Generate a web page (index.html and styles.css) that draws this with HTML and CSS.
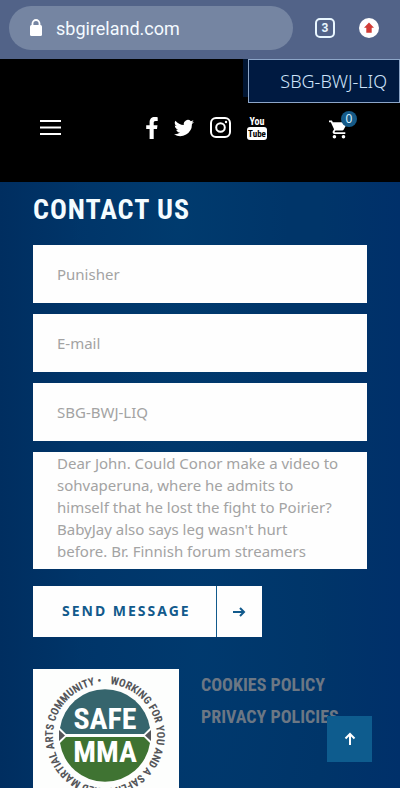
FILE: index.html
```html
<!DOCTYPE html>
<html lang="en">
<head>
  <meta charset="UTF-8">
  <meta name="viewport" content="width=device-width, initial-scale=1.0">
  <title>Contact Us</title>
  <link rel="stylesheet" href="styles.css">
</head>
<body>
  <!-- Browser bar -->
  <div class="browser-bar">
    <div class="address">
      <svg width="14" height="18" viewBox="0 0 14 18" fill="none">
        <path d="M3.5 7V4.5a3.5 3.5 0 0 1 7 0V7" stroke="#fff" stroke-width="1.8"></path>
        <rect x="1" y="6" width="12" height="11" rx="1.5" fill="#fff"></rect>
      </svg>
      <span>sbgireland.com</span>
    </div>
    <button class="tabs" aria-label="Open tabs">3</button>
    <button class="update" aria-label="Update available">
      <svg width="20" height="20" viewBox="0 0 20 20">
        <circle cx="10" cy="10" r="10" fill="#fff"></circle>
        <path d="M10 4.5l5 5.2h-2.3v5H7.3v-5H5z" fill="#d23c36"></path>
      </svg>
    </button>
  </div>

  <div class="page">
    <!-- Site header -->
    <header class="header">
      <button class="menu" aria-label="Menu">
        <svg width="21" height="16" viewBox="0 0 21 16" fill="#fff">
          <rect y="0" width="21" height="2"></rect>
          <rect y="6.5" width="21" height="2"></rect>
          <rect y="13" width="21" height="2"></rect>
        </svg>
      </button>

      <nav class="social">
        <a href="#" aria-label="Facebook">
          <svg width="12" height="22" viewBox="0 0 12 22" fill="#fff">
            <path d="M11.7 0.2v3.7H9.6C8 3.9 7.7 4.7 7.7 5.8v2.4h3.8L11 12.1H7.7V22H3.6v-9.9H0.2V8.2h3.4V5.3C3.6 1.9 5.6 0 8.7 0c1.4 0 2.6.1 3 .2z"></path>
          </svg>
        </a>
        <a href="#" aria-label="Twitter">
          <svg width="20" height="18" viewBox="0 2 24 20" fill="#fff">
            <path d="M24 4.6a10 10 0 0 1-2.8.8 5 5 0 0 0 2.1-2.7c-1 .5-2 .9-3.1 1.2a4.9 4.9 0 0 0-8.4 4.4A14 14 0 0 1 1.7 3.2a4.9 4.9 0 0 0 1.5 6.5 5 5 0 0 1-2.2-.6c0 2.3 1.6 4.4 3.9 4.9a5 5 0 0 1-2.2.1 4.9 4.9 0 0 0 4.6 3.4A10 10 0 0 1 0 19.5a14 14 0 0 0 21.5-12.4c1-.7 1.8-1.5 2.5-2.5z"></path>
          </svg>
        </a>
        <a href="#" aria-label="Instagram">
          <svg width="21" height="21" viewBox="0 0 21 21" fill="none" stroke="#fff" stroke-width="2">
            <rect x="1" y="1" width="19" height="19" rx="5"></rect>
            <circle cx="10.5" cy="10.5" r="4.3"></circle>
            <circle cx="16" cy="5" r="1.2" fill="#fff" stroke="none"></circle>
          </svg>
        </a>
        <a href="#" aria-label="YouTube">
          <svg width="20" height="24" viewBox="0 0 20 24">
            <rect x="0" y="11" width="20" height="13" rx="3" fill="#fff"></rect>
            <text class="yt yt-top" x="10" y="9" fill="#fff">You</text>
            <text class="yt" x="10" y="21" fill="#000">Tube</text>
          </svg>
        </a>
      </nav>

      <a href="#" class="cart" aria-label="Cart">
        <svg width="19" height="19" viewBox="1 2 21 20" fill="#fff">
          <path d="M7 18a2 2 0 1 0 0 4 2 2 0 0 0 0-4zM1 2v2h2l3.6 7.6-1.4 2.4C4.5 15.400 5.500 17 7 17h12v-2H7.400a.3.3 0 0 1-.2-.4l.9-1.600h7.500c.7 0 1.400-.4 1.700-1l3.600-6.500A1 1 0 0 0 20 4H5.200l-.9-2zm16 16a2 2 0 1 0 0 4 2 2 0 0 0 0-4z"></path>
        </svg>
        <span class="cart-count">0</span>
      </a>

      <div class="suggestion">SBG-BWJ-LIQ</div>
    </header>

    <main class="content">
      <h1 class="title">CONTACT US</h1>

      <form class="form">
        <input class="field" type="text" aria-label="Name" value="Punisher">
        <input class="field" type="email" aria-label="E-mail" placeholder="E-mail">
        <input class="field" type="text" aria-label="Subject" value="SBG-BWJ-LIQ">
        <textarea class="field message" aria-label="Message">Dear John. Could Conor make a video to sohvaperuna, where he admits to himself that he lost the fight to Poirier? BabyJay also says leg wasn't hurt before. Br. Finnish forum streamers</textarea>
        <button class="send" type="submit">
          <span class="send-label">SEND MESSAGE</span>
          <span class="send-icon">
            <svg width="14" height="12" viewBox="0 0 14 12" fill="none" stroke="#125a8c" stroke-width="2">
              <path d="M1 6h11M8 2l4 4-4 4"></path>
            </svg>
          </span>
        </button>
      </form>

      <!-- Footer -->
      <footer class="footer">
        <svg class="badge" viewBox="0 0 146 146" role="img" aria-label="Safe MMA">
          <defs>
            <path id="ring" d="M72 15a52 52 0 1 1-.1 0"></path>
          </defs>
          <rect width="146" height="146" fill="#fdfefd"></rect>
          <path d="M27 59a45.500 45.500 0 0 1 90 0l-6 6H33z" fill="#36656d"></path>
          <path d="M27 74l6-6h78l6 6a45.500 45.500 0 0 1-90 0z" fill="#3f7332"></path>
          <path d="M26 61l6 5.500-6 5.500zM118 61l-6 5.500 6 5.500z" fill="#55565a"></path>
          <text class="ring-text"><textPath href="#ring" startOffset="5">WORKING FOR YOU AND A SAFER MIXED MARTIAL ARTS COMMUNITY •</textPath></text>
          <text class="badge-text" x="72" y="60">SAFE</text>
          <text class="badge-text" x="72" y="93">MMA</text>
        </svg>
        <nav class="links">
          <a href="#">COOKIES POLICY</a>
          <a href="#">PRIVACY POLICIES</a>
        </nav>
      </footer>
    </main>

    <button class="to-top" aria-label="Back to top">
      <svg width="12" height="14" viewBox="0 0 12 14" fill="none" stroke="#fff" stroke-width="2">
        <path d="M6 13V2M1.500 6.500L6 2l4.500 4.500"></path>
      </svg>
    </button>
  </div>
</body>
</html>
```
FILE: styles.css
```css
* {
  margin: 0;
  padding: 0;
  box-sizing: border-box;
}

body {
  height: 100vh;
  display: flex;
  flex-direction: column;
  overflow: hidden;
  background: #003467;
  font-family: "Noto Sans", "Open Sans", sans-serif;
  font-size: 15px;
}

button {
  background: none;
  border: none;
  font-family: inherit;
  cursor: pointer;
}

a {
  text-decoration: none;
}

svg {
  display: block;
}

/* Browser bar */
.browser-bar {
  flex: none;
  height: 59px;
  padding: 0 21px 3px 9px;
  display: flex;
  align-items: center;
  background: #526388;
}

.address {
  flex: 1;
  height: 44px;
  padding-left: 20px;
  display: flex;
  align-items: center;
  gap: 13px;
  border-radius: 22px;
  background: #7585a2;
  color: #f4faff;
  font-family: Roboto, sans-serif;
  font-size: 18px;
}

.tabs {
  width: 20px;
  height: 20px;
  margin: 0 24px 0 22px;
  border: 2px solid #e9f7ff;
  border-radius: 5px;
  color: #e9f7ff;
  font-family: Roboto, sans-serif;
  font-size: 12px;
  font-weight: 700;
  line-height: 16px;
}

/* Site header */
.page {
  flex: 1;
  min-height: 0;
  position: relative;
  overflow: hidden;
  background:
    radial-gradient(ellipse at 45% 22%, rgba(0, 70, 120, 0.35), transparent 35%),
    radial-gradient(ellipse at 50% 80%, rgba(0, 66, 120, 0.35), transparent 45%),
    linear-gradient(90deg, #002e60, #003569 20%, #003569 80%, #00306a);
}

.header {
  position: relative;
  height: 123px;
  padding: 14px 43px 0 40px;
  display: flex;
  align-items: center;
  background: #000;
}

.social {
  margin: 0 62px 0 auto;
  display: flex;
  align-items: center;
  gap: 16px;
}

.yt {
  font-family: "Roboto Condensed", Roboto, sans-serif;
  font-size: 9px;
  font-weight: 700;
  text-anchor: middle;
}

.yt-top {
  font-size: 10px;
}

.cart {
  position: relative;
  width: 28px;
  padding-top: 4px;
}

.cart-count {
  position: absolute;
  top: -5px;
  right: 0;
  width: 16px;
  height: 16px;
  border-radius: 50%;
  background: #155a88;
  color: #d8f1ff;
  font-size: 12px;
  line-height: 16px;
  text-align: center;
}

.suggestion {
  position: absolute;
  top: 0;
  right: 0;
  width: 152px;
  height: 44px;
  padding-right: 12px;
  border: 1px solid #8da6c8;
  background: #001a41;
  box-shadow: -5px -6px 0 #001533;
  color: #cfe4fb;
  font-size: 18px;
  font-weight: 300;
  line-height: 42px;
  text-align: right;
}

/* Contact form */
.content {
  padding: 12px 33px 0;
}

.title {
  height: 51px;
  color: #f4fcff;
  font-family: "Roboto Condensed", Roboto, sans-serif;
  font-size: 28px;
  font-weight: 700;
  letter-spacing: 1px;
  line-height: 32px;
}

.form {
  display: flex;
  flex-direction: column;
  gap: 11px;
}

.field {
  width: 100%;
  height: 58px;
  padding: 0 28px 0 24px;
  border: none;
  border-radius: 0;
  background: #fefefe;
  color: #a3a3a3;
  font-family: inherit;
  font-size: 15px;
  line-height: 22px;
}

.field::placeholder {
  color: #a3a3a3;
}

.message {
  height: 117px;
  display: block;
  resize: none;
  overflow: hidden;
}

.send {
  align-self: flex-start;
  height: 51px;
  margin-top: 6px;
  display: flex;
  align-items: stretch;
  background: #fefefe;
  color: #125a8c;
}

.send-label {
  padding: 0 25px 0 29px;
  border-right: 1px solid #125a8c;
  font-size: 14px;
  font-weight: 700;
  letter-spacing: 2px;
  line-height: 49px;
}

.send-icon {
  width: 45px;
  display: flex;
  align-items: center;
  justify-content: center;
}

/* Footer */
.footer {
  margin-top: 32px;
  display: flex;
  align-items: flex-start;
  gap: 22px;
}

.badge {
  flex: none;
  width: 146px;
}

.ring-text {
  fill: #55565a;
  font-family: "Roboto Condensed", Roboto, sans-serif;
  font-size: 11px;
  font-weight: 700;
}

.badge-text {
  fill: #fff;
  font-family: "Roboto Condensed", Roboto, sans-serif;
  font-size: 30px;
  font-weight: 700;
  text-anchor: middle;
}

.links {
  display: flex;
  flex-direction: column;
  white-space: nowrap;
}

.links a {
  color: #6c7784;
  font-family: "Roboto Condensed", Roboto, sans-serif;
  font-size: 18px;
  font-weight: 700;
  line-height: 32px;
}

.to-top {
  position: absolute;
  right: 28px;
  bottom: 26px;
  width: 45px;
  height: 46px;
  display: flex;
  align-items: center;
  justify-content: center;
  background: #0e5c8e;
}
```
